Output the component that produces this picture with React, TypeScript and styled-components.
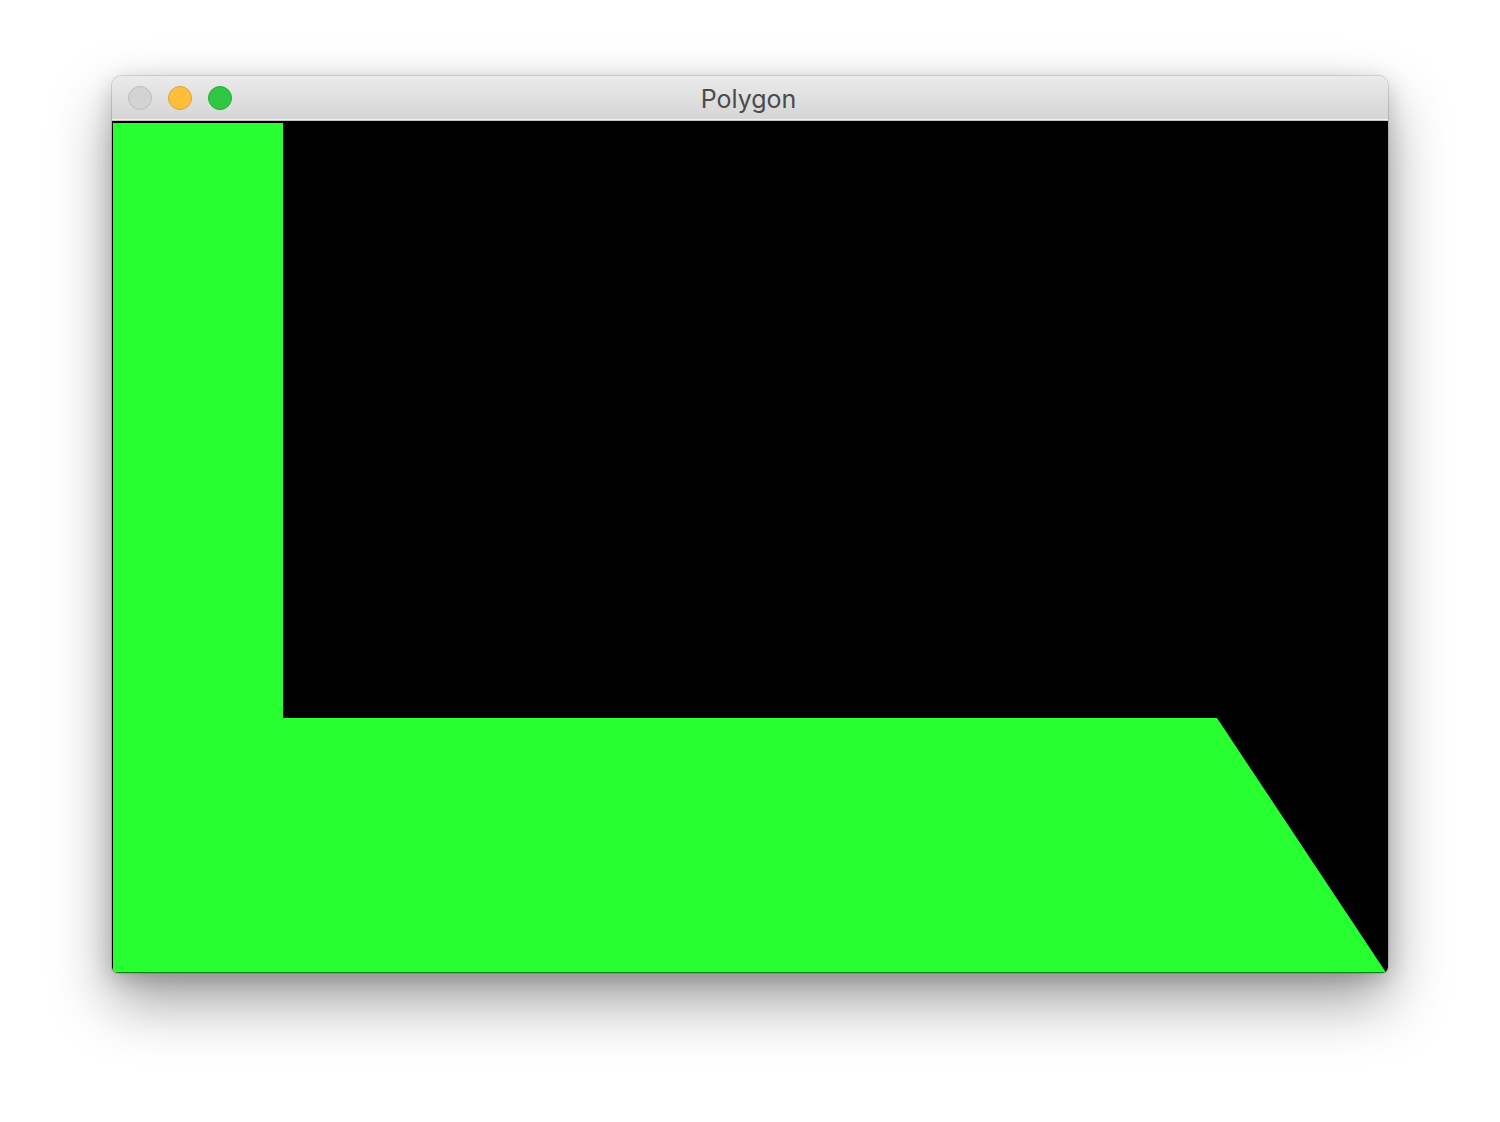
import React from "react";
import styled, { createGlobalStyle } from "styled-components";

const Global = createGlobalStyle`
  html, body { margin: 0; padding: 0; background: #ffffff; }
  body { width: 1500px; height: 1122px; overflow: hidden; }
`;

const Page = styled.div`
  width: 1500px;
  height: 1122px;
  padding: 76px 0 0 112px;
  box-sizing: border-box;
  background: #ffffff;
`;

const Window = styled.div`
  width: 1276px;
  display: flex;
  flex-direction: column;
  border-radius: 10px 10px 6px 6px;
  overflow: hidden;
  box-shadow: 0 0 0 1px rgba(0, 0, 0, 0.12), 0 28px 60px rgba(0, 0, 0, 0.38),
    0 6px 22px rgba(0, 0, 0, 0.18);
`;

const TitleBar = styled.div`
  position: relative;
  height: 44px;
  display: flex;
  align-items: center;
  justify-content: center;
  background: linear-gradient(#ebebeb, #d5d5d5);
  border-bottom: 1px solid #c4c4c4;
  box-shadow: inset 0 -1px 0 #f2f2f2;
`;

const Lights = styled.div`
  position: absolute;
  left: 16px;
  top: 10px;
  display: flex;
  gap: 16px;
`;

const Light = styled.span<{ $fill: string; $edge: string }>`
  width: 24px;
  height: 24px;
  border-radius: 50%;
  background: ${(p) => p.$fill};
  border: 1px solid ${(p) => p.$edge};
  box-sizing: border-box;
`;

const Title = styled.div`
  font-family: Inter, "Liberation Sans", sans-serif;
  font-size: 25px;
  color: #4b4b4b;
  line-height: 1;
  padding-top: 2px;
  margin-right: 3px;
`;

const Canvas = styled.svg`
  display: block;
  width: 1276px;
  height: 852px;
  background: #000000;
`;

export default function App() {
  return (
    <>
      <Global />
      <Page>
        <Window>
          <TitleBar>
            <Lights>
              <Light $fill="#d3d3d3" $edge="#bdbdbd" />
              <Light $fill="#ffbd3c" $edge="#e1a23a" />
              <Light $fill="#2fc842" $edge="#27a935" />
            </Lights>
            <Title>Polygon</Title>
          </TitleBar>
          <Canvas viewBox="0 0 1276 852">
            <polygon
              points="1,2 171,2 171,597 1105,597 1274,851.5 1,851.5"
              fill="#27ff30"
            />
          </Canvas>
        </Window>
      </Page>
    </>
  );
}
